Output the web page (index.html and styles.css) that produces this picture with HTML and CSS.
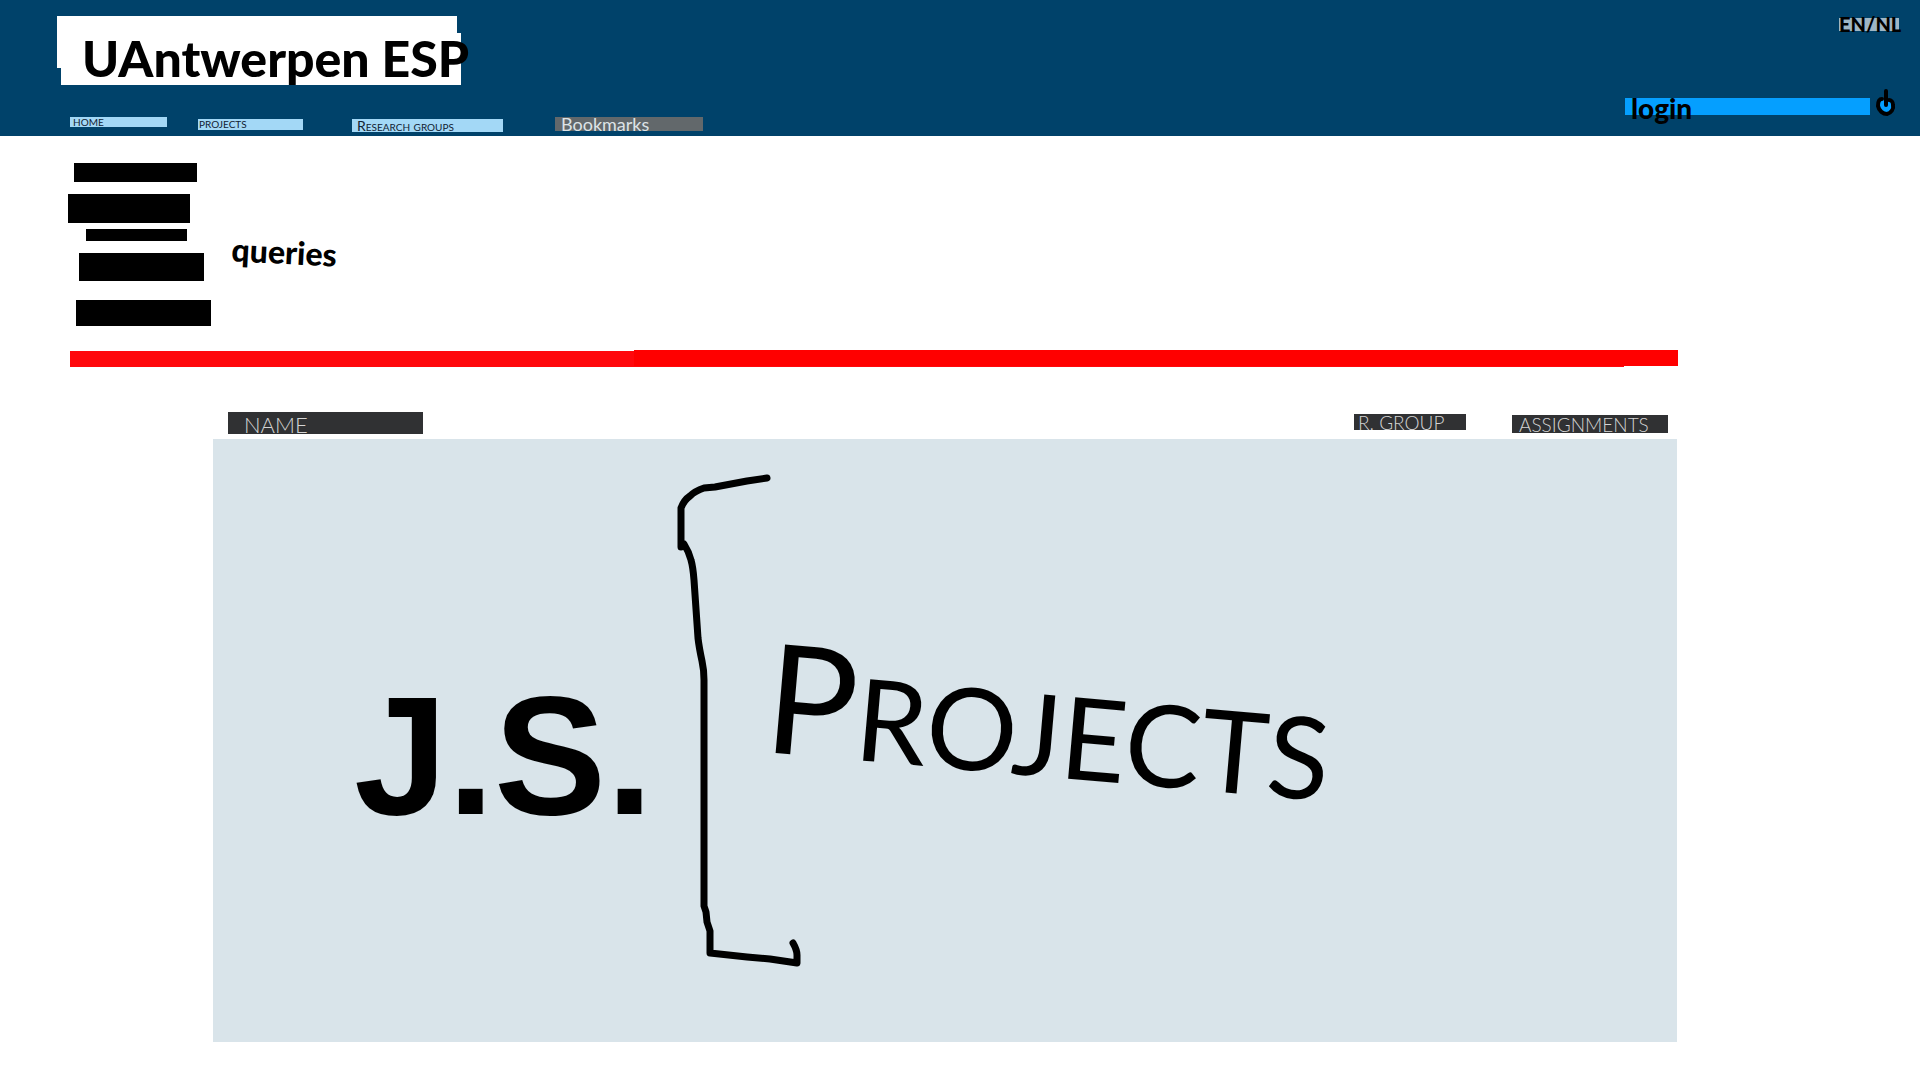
FILE: index.html
```html
<!DOCTYPE html>
<html lang="en">
<head>
<meta charset="utf-8">
<title>UAntwerpen ESP</title>
<link rel="stylesheet" href="styles.css">
</head>
<body>
<header class="header">
  <div class="header-main">
    <h1 class="logo">UAntwerpen ESP</h1>
    <nav class="nav">
      <a class="nav-link nav-home" href="#">HOME</a>
      <a class="nav-link nav-projects" href="#">PROJECTS</a>
      <a class="nav-link nav-groups" href="#">Research groups</a>
      <a class="nav-link nav-bookmarks" href="#">Bookmarks</a>
    </nav>
  </div>
  <div class="header-side">
    <a class="language" href="#">EN/NL</a>
    <div class="account">
      <button class="login" type="button">login</button>
      <button class="power" type="button" aria-label="Power">
        <svg class="power-icon" viewBox="0 0 20 28" aria-hidden="true">
          <path class="power-ring" d="M6 10C3 10 2 13 2 17C3 22 7 25 11 25C15 24 18 20 17 16C17 13 15 11 13 11"/>
          <path d="M10 2V16"/>
        </svg>
      </button>
    </div>
  </div>
</header>
<main class="main">
  <section class="queries">
    <div class="bars">
      <div class="bar bar-one"></div>
      <div class="bar bar-two"></div>
      <div class="bar bar-three"></div>
      <div class="bar bar-four"></div>
      <div class="bar bar-five"></div>
    </div>
    <h2 class="queries-title">queries</h2>
  </section>
  <div class="divider"></div>
  <section class="results">
    <div class="columns">
      <span class="column column-name">NAME</span>
      <span class="column column-group">R. GROUP</span>
      <span class="column column-assignments">ASSIGNMENTS</span>
    </div>
    <div class="panel">
      <p class="script-label">J.S.</p>
      <svg class="bracket" viewBox="676 472 126 498" aria-hidden="true">
        <path d="M767 478L747 481L715 487L704 488Q695 491 690 496Q684 500 681 508V547M684 544Q689 552 691 560Q693 567 694 580L698 638Q699 647 702 661Q704 670 704 680V906L706 912L707 922L710 931L710 953L747 957L770 959L797 963V955Q797 950 793 943"/>
      </svg>
      <p class="panel-title">PROJECTS</p>
    </div>
  </section>
</main>
</body>
</html>
```
FILE: styles.css
```css
* {
  box-sizing: border-box;
}

body {
  margin: 0;
  background: #fff;
  color: #000;
  font-family: Lato, "Liberation Sans", sans-serif;
}

h1,
h2,
p {
  margin: 0;
}

a {
  color: inherit;
  text-decoration: none;
}

button {
  padding: 0;
  border: 0;
  color: inherit;
  font-family: inherit;
  cursor: pointer;
}

.header {
  display: flex;
  justify-content: space-between;
  padding: 16px 20px 4px 57px;
  background: #00426a;
}

.header-main {
  display: flex;
  flex-direction: column;
  gap: 32px;
}

/* Two overlapping white sheets behind the site name */
.logo {
  width: 404px;
  height: 69px;
  padding: 10px 0 0 25px;
  background:
    linear-gradient(#fff, #fff) 0 0 / 400px 52px no-repeat,
    linear-gradient(#fff, #fff) 4px 17px / 400px 52px no-repeat;
  font-size: 50px;
  font-weight: 900;
  line-height: 64px;
  white-space: nowrap;
}

.nav {
  display: flex;
  align-items: flex-start;
  height: 15px;
  padding-left: 13px;
}

.nav-link {
  background: #a3d8f6;
  color: #123;
  font-size: 10px;
  line-height: 10px;
  white-space: nowrap;
}

.nav-home {
  width: 97px;
  padding-left: 3px;
}

.nav-projects {
  width: 105px;
  height: 11px;
  margin: 2px 0 0 31px;
  padding-left: 1px;
}

.nav-groups {
  width: 151px;
  height: 13px;
  margin: 2px 0 0 49px;
  padding-left: 5px;
  font-size: 14px;
  font-variant: small-caps;
  line-height: 14px;
}

.nav-bookmarks {
  width: 148px;
  height: 14px;
  margin-left: 52px;
  padding-left: 6px;
  background: #62686b;
  color: #dde3e6;
  font-size: 18px;
  line-height: 14px;
}

.header-side {
  display: flex;
  flex-direction: column;
  align-items: flex-end;
  justify-content: space-between;
  padding: 2px 0 6px;
}

.language {
  width: 60px;
  height: 13px;
  margin-right: 1px;
  background: #9fb6c5;
  font-size: 20px;
  font-weight: 900;
  line-height: 13px;
  white-space: nowrap;
}

.account {
  display: flex;
  align-items: flex-end;
  gap: 6px;
}

.login {
  width: 245px;
  height: 17px;
  margin-bottom: 11px;
  padding: 2px 0 0 6px;
  background: #059fff;
  font-size: 28px;
  font-weight: 900;
  line-height: 17px;
  text-align: left;
}

.power {
  width: 20px;
  height: 28px;
  margin: 0 4px 9px 0;
  background: none;
}

.power-icon {
  display: block;
  fill: none;
  stroke: #000;
  stroke-linecap: round;
  stroke-linejoin: round;
  stroke-width: 4;
}

.power-ring {
  fill: #059fff;
}

.main {
  padding: 27px 242px 38px 68px;
}

.queries {
  display: flex;
  gap: 21px;
}

.bars {
  width: 143px;
}

.bar {
  background: #000;
}

.bar-one {
  width: 123px;
  height: 19px;
  margin-left: 6px;
}

.bar-two {
  width: 122px;
  height: 29px;
  margin-top: 12px;
}

.bar-three {
  width: 101px;
  height: 12px;
  margin: 6px 0 0 18px;
}

.bar-four {
  width: 125px;
  height: 28px;
  margin: 12px 0 0 11px;
}

.bar-five {
  width: 135px;
  height: 26px;
  margin: 19px 0 0 8px;
}

.queries-title {
  align-self: center;
  padding-top: 14px;
  font-size: 32px;
  font-weight: 900;
  line-height: 40px;
  transform: rotate(3deg);
}

/* Two red strips laid end over end */
.divider {
  height: 17px;
  margin: 24px 0 0 2px;
  background:
    linear-gradient(#f00, #f00) 100% 0 / calc(100% - 564px) 16px no-repeat,
    linear-gradient(#ff080c, #ff080c) 0 1px / calc(100% - 54px) 16px no-repeat;
}

.results {
  margin: 45px 1px 0 145px;
}

.columns {
  display: flex;
  align-items: flex-start;
  height: 27px;
  padding: 0 9px 0 15px;
}

.column {
  background: #303133;
  color: #d4d4d4;
  font-size: 19px;
  font-weight: 300;
  white-space: nowrap;
}

.column-name {
  width: 195px;
  height: 22px;
  margin-right: auto;
  padding-left: 16px;
  font-size: 22px;
  line-height: 26px;
}

.column-group {
  width: 112px;
  height: 16px;
  margin: 2px 46px 0 0;
  padding-left: 4px;
  line-height: 18px;
}

.column-assignments {
  width: 156px;
  height: 18px;
  margin-top: 3px;
  padding-left: 7px;
  line-height: 20px;
}

.panel {
  display: flex;
  align-items: flex-start;
  padding: 33px 0 72px 141px;
  background: #d9e4ea;
}

.script-label {
  width: 322px;
  padding-top: 184px;
  font-family: "Liberation Sans", Arial, sans-serif;
  font-size: 168px;
  font-weight: 700;
  line-height: 200px;
}

.bracket {
  flex: none;
  width: 126px;
  height: 498px;
  fill: none;
  stroke: #000;
  stroke-linecap: round;
  stroke-linejoin: round;
  stroke-width: 7;
}

.panel-title {
  margin-left: -30px;
  padding-top: 158px;
  font-size: 114px;
  font-weight: 400;
  line-height: 176px;
  transform: rotate(5deg);
}

.panel-title::first-letter {
  font-size: 152px;
}
```
